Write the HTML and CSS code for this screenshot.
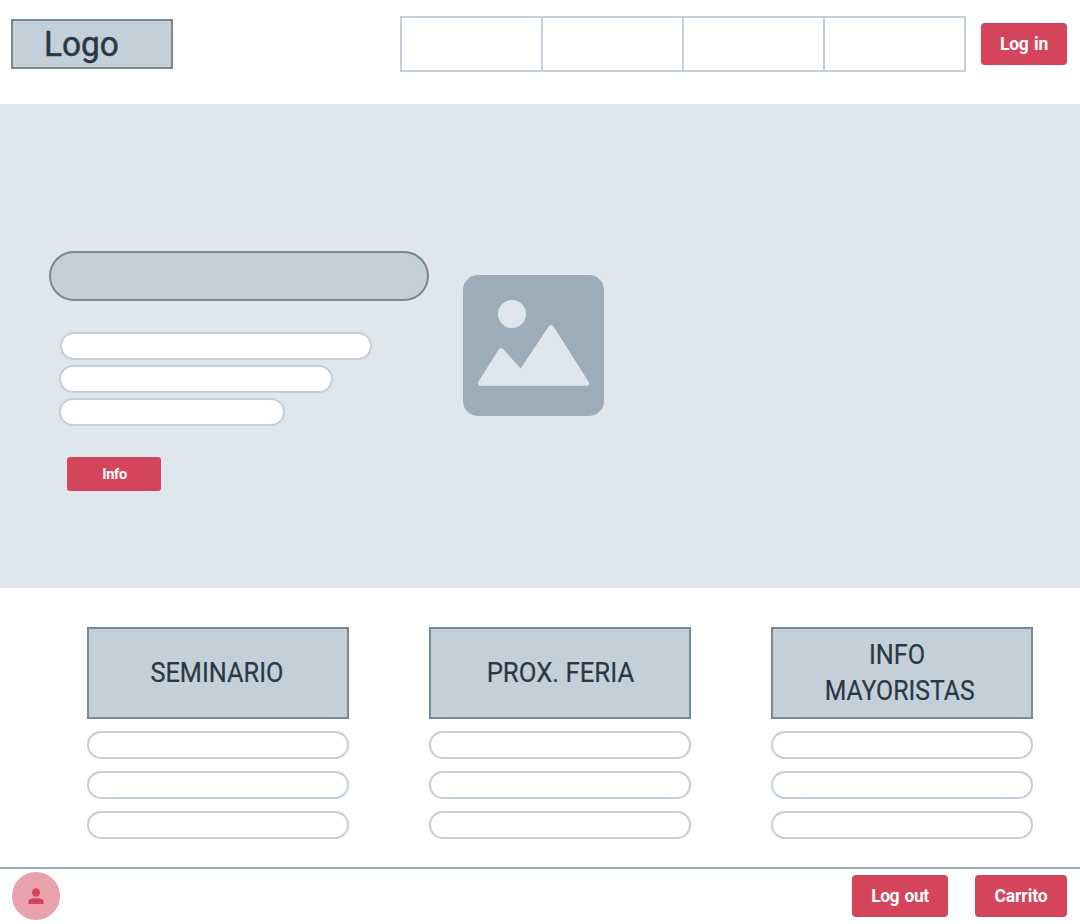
FILE: index.html
```html
<!DOCTYPE html>
<html lang="es">
<head>
<meta charset="utf-8">
<title>Inicio</title>
<link rel="stylesheet" href="styles.css">
</head>
<body>
<header class="header">
  <div class="logo"><span>Logo</span></div>
  <nav class="nav"><span></span><span></span><span></span><span></span></nav>
  <button class="btn login">Log in</button>
</header>
<main>
  <section class="hero">
    <div class="intro">
      <div class="headline"></div>
      <div class="lines">
        <div class="pill first"></div>
        <div class="pill second"></div>
        <div class="pill third"></div>
      </div>
      <button class="btn info">Info</button>
    </div>
    <svg class="picture" width="141" height="141" viewBox="0 0 141 141">
      <rect width="141" height="141" rx="15" fill="#9dacb9"/>
      <circle cx="49" cy="39" r="14" fill="#dfe6ee"/>
      <path d="M35.8 74.2Q38 71.6 40.3 74.2L57.6 93.5L85.5 51.8Q88 48.4 90.7 51.8L125.400 106.500Q127.500 110.800 124 110.800H18Q14 110.800 15.500 106.500Z" fill="#dfe6ee"/>
    </svg>
  </section>
  <section class="cards">
    <article class="card">
      <h2><span class="t-sem">SEMINARIO</span></h2>
      <div class="pill"></div><div class="pill"></div><div class="pill"></div>
    </article>
    <article class="card">
      <h2><span class="t-prox">PROX. FERIA</span></h2>
      <div class="pill"></div><div class="pill"></div><div class="pill"></div>
    </article>
    <article class="card">
      <h2><span class="t-info">INFO</span><span class="t-may">MAYORISTAS</span></h2>
      <div class="pill"></div><div class="pill"></div><div class="pill"></div>
    </article>
  </section>
</main>
<footer class="footer">
  <div class="avatar">
    <svg width="16" height="18" viewBox="0 0 16 18" fill="#d4455b">
      <ellipse cx="8" cy="5.500" rx="4" ry="4.300"/>
      <path d="M.5 17V14.500C.5 12 3 11.200 8 11.200S15.500 12 15.500 14.500V17Z"/>
    </svg>
  </div>
  <button class="btn logout">Log out</button>
  <button class="btn cart">Carrito</button>
</footer>
</body>
</html>
```
FILE: styles.css
```css
* { box-sizing: border-box; }
body {
  margin: 0;
  height: 924px;
  overflow: hidden;
  background: #fff;
  color: #293845;
  font-family: Roboto, "Liberation Sans", sans-serif;
}
.header {
  display: flex;
  height: 104px;
  padding: 16px 13px 0 11px;
}
.logo {
  width: 162px;
  height: 50px;
  margin-top: 3px;
  padding-left: 31px;
  background: #c3cfd9;
  border: 2px solid #788896;
  font-size: 35px;
  line-height: 48px;
  -webkit-text-stroke: 0.5px #293845;
}
.logo span {
  display: inline-block;
  transform: scaleX(0.955);
  transform-origin: left;
}
.nav {
  display: grid;
  grid-template-columns: repeat(4, 141px);
  width: 566px;
  height: 56px;
  margin-left: auto;
  border: 2px solid #c3cfd9;
  border-right: 0;
}
.nav span { border-right: 2px solid #c3cfd9; }
.btn {
  height: 42px;
  padding: 0;
  border: 0;
  border-radius: 4px;
  background: #d4455b;
  color: #fff;
  font: 700 17.5px/42px Roboto, "Liberation Sans", sans-serif;
  text-align: center;
}
.login { width: 86px; margin: 7px 0 0 15px; letter-spacing: -0.3px; word-spacing: 1.5px; }
.hero {
  display: flex;
  height: 484px;
  padding: 147px 0 0 49px;
  background: #dfe6ee;
}
.intro { width: 380px; }
.headline {
  height: 50px;
  border: 2px solid #788896;
  border-radius: 25px;
  background: #c3cfd9;
}
.lines {
  display: grid;
  gap: 5px;
  margin: 31px 0 0 10px;
}
.pill {
  height: 28px;
  border: 2px solid #c3cfd9;
  border-radius: 14px;
  background: #fff;
}
.first { width: 312px; margin-left: 1px; }
.second { width: 274px; }
.third { width: 226px; }
.info {
  display: block;
  width: 94px;
  height: 34px;
  margin: 31px 0 0 18px;
  padding: 1px 0 0 1px;
  border-radius: 3px;
  font-size: 14.5px;
  line-height: 33px;
  letter-spacing: -0.3px;
}
.picture { margin: 24px 0 0 34px; }
.cards {
  display: flex;
  gap: 80px;
  height: 279px;
  padding: 39px 0 0 87px;
}
.card {
  display: flex;
  flex-direction: column;
  gap: 12px;
  width: 262px;
}
.card h2 {
  display: flex;
  flex-direction: column;
  align-items: center;
  justify-content: center;
  height: 92px;
  margin: 0;
  padding-right: 3px;
  border: 2px solid #788896;
  background: #c3cfd9;
  font-size: 27px;
  font-weight: 400;
  line-height: 36px;
  -webkit-text-stroke: 0.2px #293845;
}
.t-sem { transform: scaleX(0.937); }
.t-prox { margin-left: 4px; transform: scaleX(0.953); }
.t-info { margin-right: 7px; transform: scaleX(0.937); }
.t-may { margin-right: 1px; transform: scaleX(0.918); }
.footer {
  display: flex;
  height: 57px;
  padding: 3px 13px 0 12px;
  border-top: 2px solid #9dacb9;
}
.avatar {
  display: flex;
  align-items: center;
  justify-content: center;
  width: 48px;
  height: 48px;
  border-radius: 50%;
  background: #eaa2ad;
}
.logout { width: 96px; margin: 3px 27px 0 auto; letter-spacing: -0.45px; word-spacing: 1.5px; }
.cart { width: 92px; margin-top: 3px; letter-spacing: -0.1px; }
```
